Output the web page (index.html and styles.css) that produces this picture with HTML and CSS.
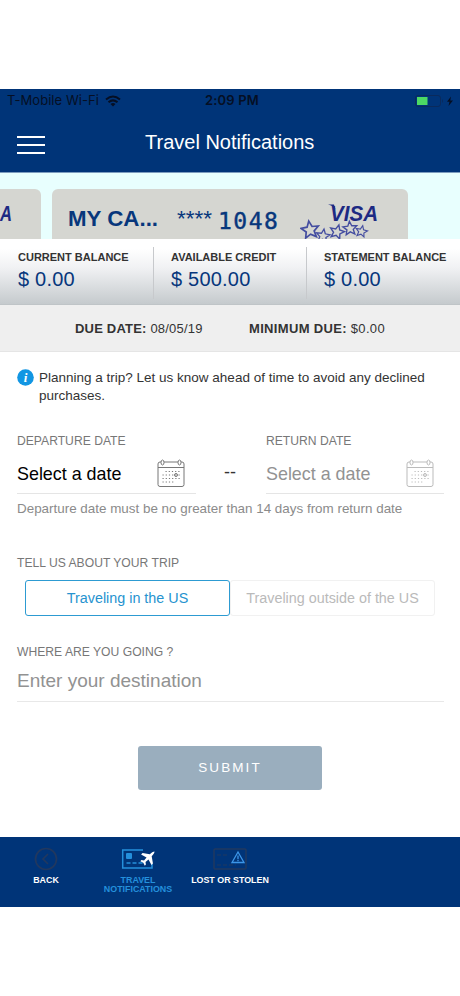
FILE: index.html
```html
<!DOCTYPE html>
<html lang="en">
<head>
<meta charset="utf-8">
<title>Travel Notifications</title>
<link rel="stylesheet" href="styles.css">
</head>
<body>
<svg class="defs" aria-hidden="true">
  <defs>
    <path id="star" d="M0-9 2.5-3.2 8.7-2.8 4 1.4 5.4 7.4 0 4.2-5.4 7.4-4 1.4-8.7-2.8-2.5-3.2Z"/>
    <g id="calendar" fill="none" stroke="currentColor">
      <rect x="1" y="3" width="26" height="24.500" rx="2"/>
      <path d="M1 8.500H27"/>
      <ellipse cx="5.500" cy="3.500" rx="1.500" ry="2.500" fill="#fff"/>
      <ellipse cx="22.500" cy="3.500" rx="1.500" ry="2.500" fill="#fff"/>
      <path d="M8.500 12.500H24M5.500 16H24M5.500 19.500H24M5.500 23H18" stroke-dasharray="1.200 2"/>
      <circle cx="19" cy="16" r="1.500"/>
    </g>
  </defs>
</svg>
<div class="screen">
  <header class="header">
    <div class="status">
      <span class="carrier">T-Mobile Wi-Fi</span>
      <svg class="wifi" width="16" height="12" viewBox="0 0 16 12" fill="none" stroke="#050f24" stroke-width="2"><path d="M1 4.500Q8-1.500 15 4.500M3.500 7.300Q8 3.500 12.500 7.300"/><path d="M5.500 9 8 11.500 10.500 9Q8 7 5.500 9Z" fill="#050f24" stroke="none"/></svg>
      <span class="time">2:09 PM</span>
      <svg class="battery" width="40" height="12" viewBox="0 0 40 12"><rect x=".5" y=".5" width="25" height="11" rx="2.500" fill="none" stroke="#0a2a5c"/><rect x="2" y="2" width="10.500" height="8" fill="#4cd964"/><path d="M27 4v4q2-2 0-4" fill="#0a2a5c"/><path d="M36 1.500 32 6.800h2.500L33.500 11 38 5.400h-2.700Z" fill="#050f24"/></svg>
    </div>
    <div class="titlebar">
      <div class="menu"><i></i><i></i><i></i></div>
      <h1>Travel Notifications</h1>
    </div>
  </header>
  <section class="cards">
    <div class="card previous"><svg width="16" height="20"><text class="visa" x="0" y="17" textLength="12" lengthAdjust="spacingAndGlyphs">A</text></svg></div>
    <div class="card current">
      <strong class="card-name">MY CA...</strong>
      <span class="mask">****</span>
      <span class="digits">1048</span>
      <svg class="brand" width="80" height="50" viewBox="0 0 80 50">
        <text class="visa" x="30" y="31.500" textLength="48" lengthAdjust="spacingAndGlyphs">VISA</text>
        <path d="M28 15.500h6l1.500 5q-2.500-4-7.500-5" fill="#1d2a83"/>
        <g fill="none" stroke="#444da0" stroke-width="1.700"><use href="#star" transform="translate(10 41) rotate(-8)"/><use href="#star" transform="translate(23 47) rotate(8) scale(.78)"/><use href="#star" transform="translate(37 43) rotate(15) scale(.82)"/><use href="#star" transform="translate(50 39.500) rotate(-5) scale(.8)"/><use href="#star" transform="translate(61.500 42.500) rotate(12) scale(.66)"/></g>
      </svg>
    </div>
  </section>
  <section class="balances">
    <div class="balance"><h2>CURRENT BALANCE</h2><p>$ 0.00</p></div>
    <div class="balance"><h2>AVAILABLE CREDIT</h2><p>$ 500.00</p></div>
    <div class="balance"><h2>STATEMENT BALANCE</h2><p>$ 0.00</p></div>
  </section>
  <section class="due"><span class="due-date"><b>DUE DATE:</b> 08/05/19</span><span class="due-min"><b>MINIMUM DUE:</b> $0.00</span></section>
  <main class="form">
    <div class="notice">
      <svg width="17" height="17" viewBox="0 0 17 17"><circle cx="8.500" cy="8.500" r="8.300" fill="#1296e3"/><text x="8.500" y="13" class="info">i</text></svg>
      <p>Planning a trip? Let us know ahead of time to avoid any declined<br>purchases.</p>
    </div>
    <div class="dates">
      <div class="field departure"><label>DEPARTURE DATE</label><div class="picker"><span>Select a date</span><svg width="28" height="28" viewBox="0 0 28 28"><use href="#calendar"/></svg></div></div>
      <span class="dash">--</span>
      <div class="field return"><label>RETURN DATE</label><div class="picker"><span>Select a date</span><svg width="28" height="28" viewBox="0 0 28 28"><use href="#calendar"/></svg></div></div>
    </div>
    <p class="hint">Departure date must be no greater than 14 days from return date</p>
    <label class="trip-label">TELL US ABOUT YOUR TRIP</label>
    <div class="segments"><div class="segment selected"><span>Traveling in the US</span></div><div class="segment"><span>Traveling outside of the US</span></div></div>
    <label class="where-label">WHERE ARE YOU GOING ?</label>
    <div class="destination"><span>Enter your destination</span></div>
    <div class="submit"><span>SUBMIT</span></div>
  </main>
  <nav class="tabs">
    <div class="tab"><svg width="24" height="24" viewBox="0 0 24 24" fill="none" stroke="#21385f" stroke-width="1.700"><circle cx="12" cy="12" r="10.500"/><path d="m14 7-5 5 5 5"/></svg><span>BACK</span></div>
    <div class="tab active"><svg width="36" height="24" viewBox="0 0 36 24"><path d="M23 3H2.700v18h29.300v-4" fill="none" stroke="#2490dc" stroke-width="1.500"/><rect x="6" y="6" width="6" height="6" rx="1" fill="#2490dc"/><path d="M6.500 16H23" stroke="#2490dc" stroke-width="1.500" stroke-dasharray="4 2"/><path transform="translate(28.500 10.500) rotate(45) scale(1.050)" fill="#fff" d="M0-8Q1.300-7 1.300-3L7 1v2L1.300 1.300 1 5l2 1.500V8L0 7l-3 1V6.500L-1 5l-.3-3.700L-7 3V1l5.700-4Q-1.300-7 0-8Z"/></svg><span>TRAVEL<br>NOTIFICATIONS</span></div>
    <div class="tab"><svg width="34" height="24" viewBox="0 0 34 24" fill="none"><rect x="1" y="2" width="32" height="20" rx="1" stroke="#21385f" stroke-width="1.500"/><path d="M4 8h11M4 18h19" stroke="#21385f" stroke-dasharray="4 2"/><path d="M25 5 31 15.500H19Z" stroke="#3c96e8" stroke-width="1.300"/><path d="M25 8.500v3.800M25 13v1.300" stroke="#3c96e8" stroke-width="1.300"/></svg><span>LOST OR STOLEN</span></div>
  </nav>
</div>
</body>
</html>
```
FILE: styles.css
```css
* { box-sizing: border-box; margin: 0; padding: 0; }
body { width: 460px; height: 996px; background: #fff; font-family: "Liberation Sans", Arial, sans-serif; color: #333; overflow: hidden; }
svg { display: block; flex-shrink: 0; }
.defs { width: 0; height: 0; }
.screen { padding-top: 89px; }
.header { height: 84px; background: #003478; border-bottom: 1px solid #7d9cbe; }
.status { height: 23px; display: grid; grid-template-columns: 98px 100px 210px 40px; padding-left: 7px; align-items: center; color: #050f24; font: 13px/23px Inter, sans-serif; }
.carrier { letter-spacing: .05px; white-space: nowrap; }
.time { font-weight: 600; letter-spacing: .15px; }
.titlebar { height: 60px; display: grid; grid-template-columns: 128px 1fr; align-items: center; padding-left: 17px; color: #fff; }
.menu { width: 28px; display: grid; gap: 6px; padding-top: 5px; }
.menu i { height: 2px; background: #fff; }
h1 { font-size: 20px; line-height: 60px; font-weight: 400; }
.cards { height: 66px; display: flex; gap: 11px; padding-top: 16px; background: #e8fffe; overflow: hidden; }
.card { height: 50px; background: #d5d6d1; border-radius: 6px 6px 0 0; display: flex; }
.previous { width: 41px; border-top-left-radius: 0; padding-top: 15px; }
.current { width: 356px; padding-left: 16px; color: #07377c; line-height: 59px; }
.card-name { width: 109px; font-size: 22.300px; }
.mask { width: 41px; font-size: 22.500px; }
.digits { width: 82px; font: 23px/64px "DejaVu Sans Mono", monospace; letter-spacing: 1.500px; -webkit-text-stroke: .4px #07377c; }
.visa { font: italic bold 22px "Liberation Sans", sans-serif; fill: #1d2a83; }
.balances { height: 66px; display: grid; grid-template-columns: 153px 153px 154px; background: linear-gradient(#fff 15%, #f0f1f3 45%, #c5cacd); border-bottom: 1px solid #bfc4c7; }
.balance { padding: 11px 0 0 18px; position: relative; white-space: nowrap; }
.balance + .balance::before { content: ""; position: absolute; left: 0; top: 8px; height: 52px; width: 1px; background: #c7c9cc; }
h2 { font-size: 11px; line-height: 15px; color: #333; }
.balance p { font-size: 20px; line-height: 28px; letter-spacing: .2px; color: #07377c; }
.due { height: 47px; background: #efefef; border-bottom: 1px solid #e5e5e5; display: grid; grid-template-columns: 174px 1fr; padding-left: 75px; font-size: 13px; line-height: 47px; letter-spacing: .2px; }
.due-min { letter-spacing: .33px; }
.form { height: 485px; padding: 17px 16px 0 17px; }
.notice { display: flex; gap: 5px; font-size: 13.500px; line-height: 18px; height: 65px; white-space: nowrap; }
.info { font: italic bold 13px "Liberation Serif", serif; fill: #fff; text-anchor: middle; }
label { display: block; font-size: 12.150px; line-height: 16px; color: #777; }
.dates { display: grid; grid-template-columns: 179px 70px 1fr; height: 60px; }
.dates label { line-height: 15px; height: 17px; }
.picker { display: flex; height: 43px; padding-top: 6px; border-bottom: 1px solid #e5e5e5; font-size: 17.900px; line-height: 34px; color: #000; }
.picker span { width: 140px; white-space: nowrap; }
.picker svg { margin-top: 2px; color: #777; }
.return .picker { color: #929292; }
.return .picker svg { color: #bbb; }
.dash { padding: 28px 0 0 28px; font-size: 18px; line-height: 20px; }
.hint { font-size: 13.420px; line-height: 16px; margin-top: 7px; color: #8b8b8b; white-space: nowrap; }
.trip-label { margin-top: 38px; }
.segments { display: grid; grid-template-columns: 205px 205px; margin: 9px 0 0 8px; }
.segment { height: 36px; border: 1px solid #f1f1f1; border-radius: 3px; font-size: 14.350px; line-height: 35px; text-align: center; color: #bababa; white-space: nowrap; }
.segment.selected { border-color: #2d9bd2; color: #2693cf; }
.where-label { margin-top: 28px; }
.destination { height: 42px; border-bottom: 1px solid #e8e8e8; font-size: 19px; line-height: 42px; color: #929292; }
.submit { width: 184px; height: 44px; margin: 44px 0 0 121px; background: #9aaebe; border-radius: 3px; color: #fff; text-align: center; font-size: 13.500px; line-height: 43px; letter-spacing: 2.100px; }
.tabs { height: 70px; display: flex; background: #003478; padding: 10px 0 0; }
.tab { width: 92px; display: flex; flex-direction: column; align-items: center; gap: 5px; color: #fff; font-size: 8.900px; line-height: 9px; font-weight: 700; text-align: center; white-space: nowrap; }
.active { color: #2490dc; }
```
